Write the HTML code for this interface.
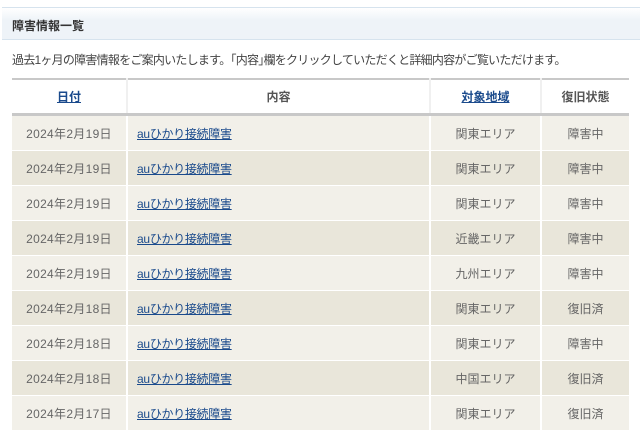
<!DOCTYPE html>
<html><head><meta charset="utf-8"><style>
body{margin:0;background:#fff;font-family:"Liberation Sans","Noto Sans CJK JP",sans-serif;width:640px;height:432px;overflow:hidden;position:relative}
.hd{position:absolute;left:2px;top:7px;width:638px;height:31px;border-top:1px solid #d6e3ee;border-bottom:1px solid #d6e3ee;background:linear-gradient(#fff,#eef3f8 40%,#eef3f8)}
.hd span{position:absolute;left:10px;top:9px;font-size:12px;font-weight:bold;color:#333}
.intro{position:absolute;left:12px;top:51px;font-size:12px;color:#444;white-space:nowrap;letter-spacing:-0.75px}
table{position:absolute;left:12px;top:78px;width:617px;border-collapse:collapse;table-layout:fixed;font-size:12px}
thead tr{border-top:2px solid #c8c8c8;border-bottom:3px solid #c8c8c8}
th{height:33px;font-weight:bold;color:#555;border-left:2px solid #f0f0f0;padding:0}
th:first-child{border-left:none}
th a{color:#1a4a8c}
td{height:34px;text-align:center;color:#666;border-left:2px solid #fff;border-top:1px solid #fff;padding:0}
td:first-child{border-left:none;letter-spacing:0.3px}
td.c{text-align:left;padding-left:9px;letter-spacing:-0.3px}
td a{color:#1a4a8c}
tbody tr:nth-child(odd) td{background:#f2f0e9}
tbody tr:nth-child(even) td{background:#e9e6da}
</style></head><body>
<div class="hd"><span>障害情報一覧</span></div>
<div class="intro">過去1ヶ月の障害情報をご案内いたします。｢内容｣欄をクリックしていただくと詳細内容がご覧いただけます。</div>
<table>
<colgroup><col style="width:115px"><col style="width:303px"><col style="width:111px"><col style="width:88px"></colgroup>
<thead><tr><th><a href="#">日付</a></th><th>内容</th><th><a href="#">対象地域</a></th><th>復旧状態</th></tr></thead>
<tbody>
<tr><td>2024年2月19日</td><td class="c"><a href="#">auひかり接続障害</a></td><td>関東エリア</td><td>障害中</td></tr>
<tr><td>2024年2月19日</td><td class="c"><a href="#">auひかり接続障害</a></td><td>関東エリア</td><td>障害中</td></tr>
<tr><td>2024年2月19日</td><td class="c"><a href="#">auひかり接続障害</a></td><td>関東エリア</td><td>障害中</td></tr>
<tr><td>2024年2月19日</td><td class="c"><a href="#">auひかり接続障害</a></td><td>近畿エリア</td><td>障害中</td></tr>
<tr><td>2024年2月19日</td><td class="c"><a href="#">auひかり接続障害</a></td><td>九州エリア</td><td>障害中</td></tr>
<tr><td>2024年2月18日</td><td class="c"><a href="#">auひかり接続障害</a></td><td>関東エリア</td><td>復旧済</td></tr>
<tr><td>2024年2月18日</td><td class="c"><a href="#">auひかり接続障害</a></td><td>関東エリア</td><td>障害中</td></tr>
<tr><td>2024年2月18日</td><td class="c"><a href="#">auひかり接続障害</a></td><td>中国エリア</td><td>復旧済</td></tr>
<tr><td>2024年2月17日</td><td class="c"><a href="#">auひかり接続障害</a></td><td>関東エリア</td><td>復旧済</td></tr>
</tbody></table>
</body></html>
